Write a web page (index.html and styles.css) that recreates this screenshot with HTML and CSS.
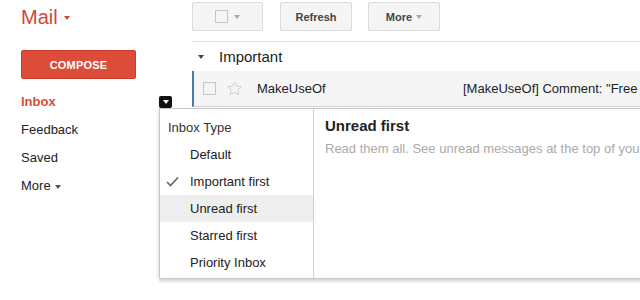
FILE: index.html
```html
<!DOCTYPE html>
<html>
<head>
<meta charset="utf-8">
<link rel="stylesheet" href="styles.css">
</head>
<body>
<div class="app">
  <aside class="sidebar">
    <div class="brand">Mail <span class="caret red"></span></div>
    <div class="compose">COMPOSE</div>
    <ul class="nav">
      <li class="active">Inbox</li>
      <li>Feedback</li>
      <li>Saved</li>
      <li>More <span class="caret dark"></span></li>
    </ul>
  </aside>
  <main class="main">
    <div class="toolbar">
      <div class="btn btn-select"><span class="cbox"></span><span class="caret grey"></span></div>
      <div class="btn btn-refresh">Refresh</div>
      <div class="btn btn-more">More <span class="caret grey"></span></div>
    </div>
    <div class="section"><span class="tri"></span>Important</div>
    <div class="row">
      <span class="cbox"></span>
      <svg class="star" width="17" height="17" viewBox="0 0 24 24"><path d="M12 2.5l2.9 6.3 6.8.7-5.1 4.6 1.5 6.8L12 17.4l-6.1 3.5 1.5-6.8-5.1-4.6 6.8-.7z" fill="none" stroke="#d0d0d0" stroke-width="1.4" stroke-linejoin="round"/></svg>
      <span class="sender">MakeUseOf</span>
      <span class="subject">[MakeUseOf] Comment: "Free</span>
    </div>
  </main>
</div>

<div class="toggle"><span class="toggle-tri"></span></div>

<div class="menu">
  <div class="menu-list">
    <div class="menu-head">Inbox Type</div>
    <div class="menu-item">Default</div>
    <div class="menu-item checked">
      <svg class="check" width="13" height="11" viewBox="0 0 13 11"><path d="M1 6l3.5 3.5L12 1.5" fill="none" stroke="#666" stroke-width="1.7"/></svg>
      Important first
    </div>
    <div class="menu-item hover">Unread first</div>
    <div class="menu-item">Starred first</div>
    <div class="menu-item">Priority Inbox</div>
  </div>
  <div class="menu-detail">
    <div class="detail-title">Unread first</div>
    <div class="detail-text">Read them all. See unread messages at the top of your</div>
  </div>
</div>
</body>
</html>
```

FILE: styles.css
```css
* { box-sizing: border-box; }
html, body {
  margin: 0;
  padding: 0;
  width: 640px;
  height: 300px;
  overflow: hidden;
  background: #fff;
  font-family: "Liberation Sans", Arial, sans-serif;
  color: #222;
}
.app {
  display: flex;
  height: 300px;
}
.sidebar {
  width: 192px;
  flex: none;
  padding: 5px 0 0 21px;
}
.brand {
  font-size: 20px;
  line-height: 24px;
  color: #d14836;
  display: flex;
  align-items: center;
  gap: 6px;
}
.caret {
  display: inline-block;
  width: 0;
  height: 0;
  border-left: 3.5px solid transparent;
  border-right: 3.5px solid transparent;
  border-top: 4px solid #777;
}
.caret.red { border-top-color: #d14836; margin-top: 2px; }
.caret.dark { border-top-color: #555; vertical-align: middle; margin-left: 1px; }
.caret.grey { border-top-color: #aaa; }
.compose {
  margin-top: 21px;
  width: 115px;
  height: 29px;
  background: #dd4b39;
  border: 1px solid #c93c2a;
  border-radius: 2px;
  color: #fff;
  font-weight: bold;
  font-size: 11px;
  display: flex;
  align-items: center;
  justify-content: center;
  letter-spacing: 0.2px;
}
.nav {
  list-style: none;
  margin: 9px 0 0;
  padding: 0;
}
.nav li {
  height: 28px;
  line-height: 28px;
  font-size: 13px;
  color: #222;
}
.nav li.active {
  color: #dd4b39;
  font-weight: bold;
}
.main {
  flex: 1;
  min-width: 0;
}
.toolbar {
  display: flex;
  gap: 17px;
  padding-top: 2px;
  height: 42px;
  border-bottom: 1px solid #e5e5e5;
}
.btn {
  height: 29px;
  background: #f5f5f5;
  border: 1px solid #dcdcdc;
  border-radius: 2px;
  display: flex;
  align-items: center;
  justify-content: center;
  gap: 4px;
  font-size: 11px;
  font-weight: bold;
  color: #444;
}
.btn-select { width: 71px; gap: 6px; }
.btn-refresh { width: 72px; }
.btn-more { width: 72px; margin-left: -1px; }
.cbox {
  display: inline-block;
  width: 13px;
  height: 13px;
  border: 1px solid #c6c6c6;
  background: #fff;
}
.btn-select .cbox { background: transparent; }
.section {
  height: 29px;
  display: flex;
  align-items: center;
  font-size: 15px;
  color: #222;
  padding-left: 6px;
}
.tri {
  width: 0;
  height: 0;
  border-left: 3.5px solid transparent;
  border-right: 3.5px solid transparent;
  border-top: 4px solid #444;
  margin-right: 15px;
}
.row {
  height: 36px;
  background: #f5f5f5;
  border-left: 2px solid #4d79b3;
  border-bottom: 1px solid #d4d4d4;
  display: flex;
  align-items: center;
  font-size: 13px;
  color: #222;
  white-space: nowrap;
  overflow: hidden;
}
.row .cbox {
  margin-left: 9px;
  background: transparent;
}
.star { margin-left: 10px; }
.sender { margin-left: 14px; width: 206px; flex: none; }
.subject { flex: none; }
.toggle {
  position: absolute;
  left: 159px;
  top: 96px;
  width: 13px;
  height: 12px;
  background: #111;
  border-radius: 2px;
  display: flex;
  align-items: center;
  justify-content: center;
}
.toggle-tri {
  width: 0;
  height: 0;
  border-left: 3.5px solid transparent;
  border-right: 3.5px solid transparent;
  border-top: 4px solid #fff;
}
.menu {
  position: absolute;
  left: 159px;
  top: 108px;
  width: 500px;
  height: 171px;
  background: #fff;
  border: 1px solid #c8c8c8;
  box-shadow: 0 2px 4px rgba(0,0,0,0.2);
  display: flex;
}
.menu-list {
  width: 154px;
  flex: none;
  border-right: 1px solid #d0d0d0;
  padding-top: 5px;
}
.menu-head {
  height: 27px;
  line-height: 27px;
  padding-left: 8px;
  font-size: 13px;
  color: #333;
}
.menu-item {
  height: 27px;
  line-height: 27px;
  padding-left: 30px;
  font-size: 13px;
  color: #222;
  position: relative;
}
.menu-item.hover { background: #eee; }
.check {
  position: absolute;
  left: 6px;
  top: 8px;
}
.menu-detail {
  padding: 7px 0 0 11px;
  white-space: nowrap;
}
.detail-title {
  font-size: 15px;
  font-weight: bold;
  line-height: 20px;
  color: #222;
}
.detail-text {
  margin-top: 4px;
  font-size: 13px;
  line-height: 18px;
  color: #aaa;
}
```
